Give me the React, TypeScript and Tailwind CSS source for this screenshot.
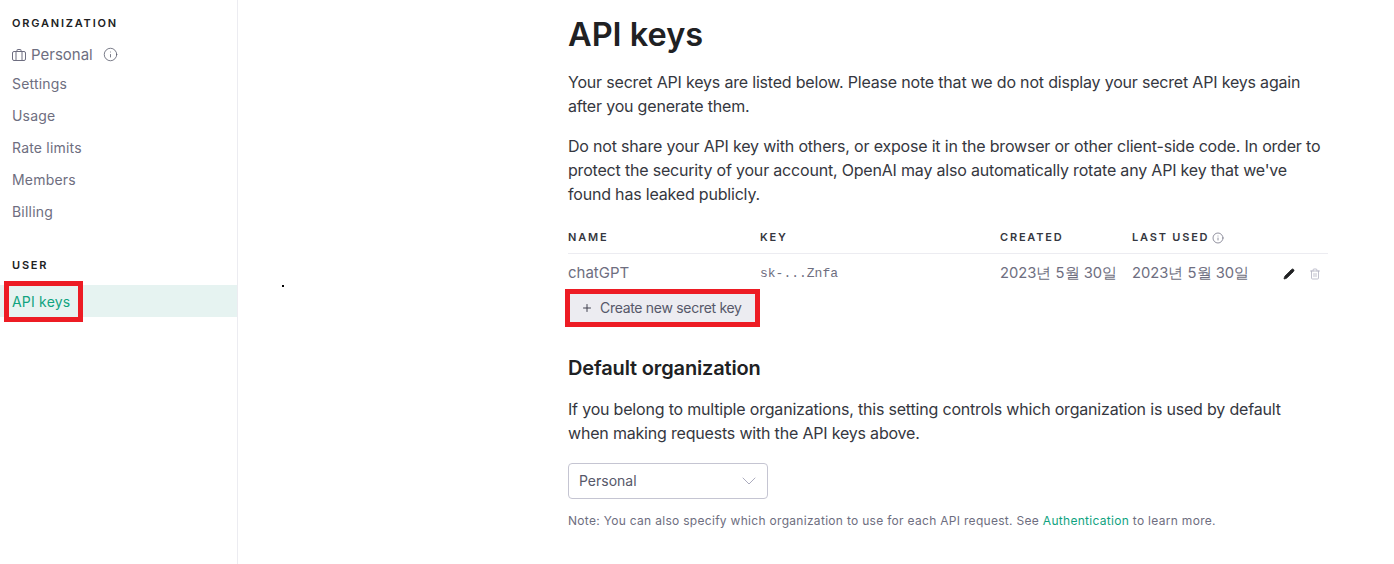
import { Info, Plus, ChevronDown, Pencil, Trash2 } from "lucide-react";

const orgLinks = ["Settings", "Usage", "Rate limits", "Members", "Billing"];

function CaseIcon() {
  return (
    <svg viewBox="0 0 14 14" className="w-[14px] h-[14px] mr-[5px]" fill="none" stroke="currentColor" strokeWidth="1">
      <rect x="0.5" y="3.5" width="13" height="9" rx="1.5" />
      <path d="M4 3.5v9M10 3.5v9M5 3.5V2a.5.5 0 0 1 .5-.5h3a.5.5 0 0 1 .5.5v1.5" />
    </svg>
  );
}

function Sidebar() {
  return (
    <aside className="w-[238px] h-[564px] shrink-0 border-r border-[#ececf1] pt-[15px]">
      <div className="px-3 text-[11px] leading-[16px] font-semibold tracking-[1.8px] text-[#202123]">ORGANIZATION</div>
      <div className="flex items-center h-[24px] mt-[12px] px-3 text-[#6e6e80] text-[15px]">
        <CaseIcon />
        <span>Personal</span>
        <Info className="w-[15px] h-[15px] ml-[10px] -mt-[2px] text-[#565869]" strokeWidth={1.25} />
      </div>
      <div>
        {orgLinks.map((link) => (
          <div key={link} className="h-[32px] px-3 flex items-center text-[14px] tracking-[0.2px] text-[#6e6e80]">{link}</div>
        ))}
      </div>
      <div className="mt-[30px] px-3 text-[11px] leading-[16px] font-semibold tracking-[1.8px] text-[#202123]">USER</div>
      <div className="relative mt-[12px] h-[32px] px-3 flex items-center text-[14px] tracking-[0.2px] text-[#10a37f] bg-[#e6f3f1]">
        API keys
        <div className="absolute left-[4px] -top-[4px] w-[79px] h-[41px] border-[5px] border-[#ed1c24]" />
      </div>
    </aside>
  );
}

function KeyTable() {
  return (
    <div className="mt-[16px] w-[760px]">
      <div className="flex h-[32px] items-center border-b border-[#ececf1] text-[11px] font-semibold tracking-[1.8px] text-[#353740]">
        <div className="w-[192px]">NAME</div>
        <div className="w-[240px]">KEY</div>
        <div className="w-[132px]">CREATED</div>
        <div className="flex items-center">
          LAST USED
          <Info className="w-[12px] h-[12px] ml-[3px] text-[#6e6e80]" strokeWidth={1.5} />
        </div>
      </div>
      <div className="flex h-[39px] items-center text-[#6e6e80] text-[15px]">
        <div className="w-[192px]">chatGPT</div>
        <div className="w-[240px] text-[13px] font-['Liberation_Mono',monospace]">sk-...Znfa</div>
        <div className="w-[132px] whitespace-nowrap text-[14.75px]">2023년 5월 30일</div>
        <div className="w-[151px] whitespace-nowrap text-[14.75px]">2023년 5월 30일</div>
        <Pencil className="w-[12px] h-[12px] text-[#202123] fill-[#202123]" strokeWidth={1.5} />
        <Trash2 className="w-[12px] h-[12px] ml-[14px] text-[#acacbe]" strokeWidth={1.5} />
      </div>
      <div className="relative w-fit">
        <button className="flex items-center h-[29px] w-[187px] pl-[13px] bg-[#ececf1] text-[14px] tracking-[-0.3px] text-[#565869]">
          <Plus className="w-[12px] h-[12px] mr-[7px] text-[#40414f]" strokeWidth={2} />
          Create new secret key
        </button>
        <div className="absolute -left-[3px] -top-[4px] w-[195px] h-[38px] border-[5px] border-[#ed1c24]" />
      </div>
    </div>
  );
}

export default function App() {
  return (
    <div className="flex h-[564px] overflow-hidden bg-white font-['Inter',sans-serif]">
      <Sidebar />
      <main className="relative flex-1 pl-[330px] pt-[15px]">
        <div className="absolute left-[44px] top-[285px] w-[2px] h-[2px] bg-black" />
        <h1 className="text-[32.5px] leading-[40px] font-semibold text-[#202123]">API keys</h1>
        <div className="mt-[15px] w-[756px] text-[16px] leading-[24px] tracking-[-0.19px] text-[#353740]">
          <p>Your secret API keys are listed below. Please note that we do not display your secret API keys again after you generate them.</p>
          <p className="mt-[16px]">Do not share your API key with others, or expose it in the browser or other client-side code. In order to protect the security of your account, OpenAI may also automatically rotate any API key that we've found has leaked publicly.</p>
        </div>
        <KeyTable />
        <h2 className="mt-[32px] text-[20px] leading-[28px] font-semibold tracking-[-0.15px] text-[#202123]">Default organization</h2>
        <p className="mt-[15px] w-[756px] text-[16px] leading-[24px] tracking-[-0.19px] text-[#353740]">If you belong to multiple organizations, this setting controls which organization is used by default when making requests with the API keys above.</p>
        <div className="mt-[18px] flex items-center justify-between w-[200px] h-[36px] px-[10px] border border-[#c5c5d2] rounded-[4px] text-[14px] text-[#565869]">
          <span className="-mt-[2px]">Personal</span>
          <ChevronDown className="w-[24px] h-[24px] -mr-[4px] text-[#acacbe]" strokeWidth={1} />
        </div>
        <p className="mt-[13px] text-[12px] leading-[18px] tracking-[0.3px] text-[#6e6e80]">
          Note: You can also specify which organization to use for each API request. See <span className="text-[#10a37f]">Authentication</span> to learn more.
        </p>
      </main>
    </div>
  );
}
